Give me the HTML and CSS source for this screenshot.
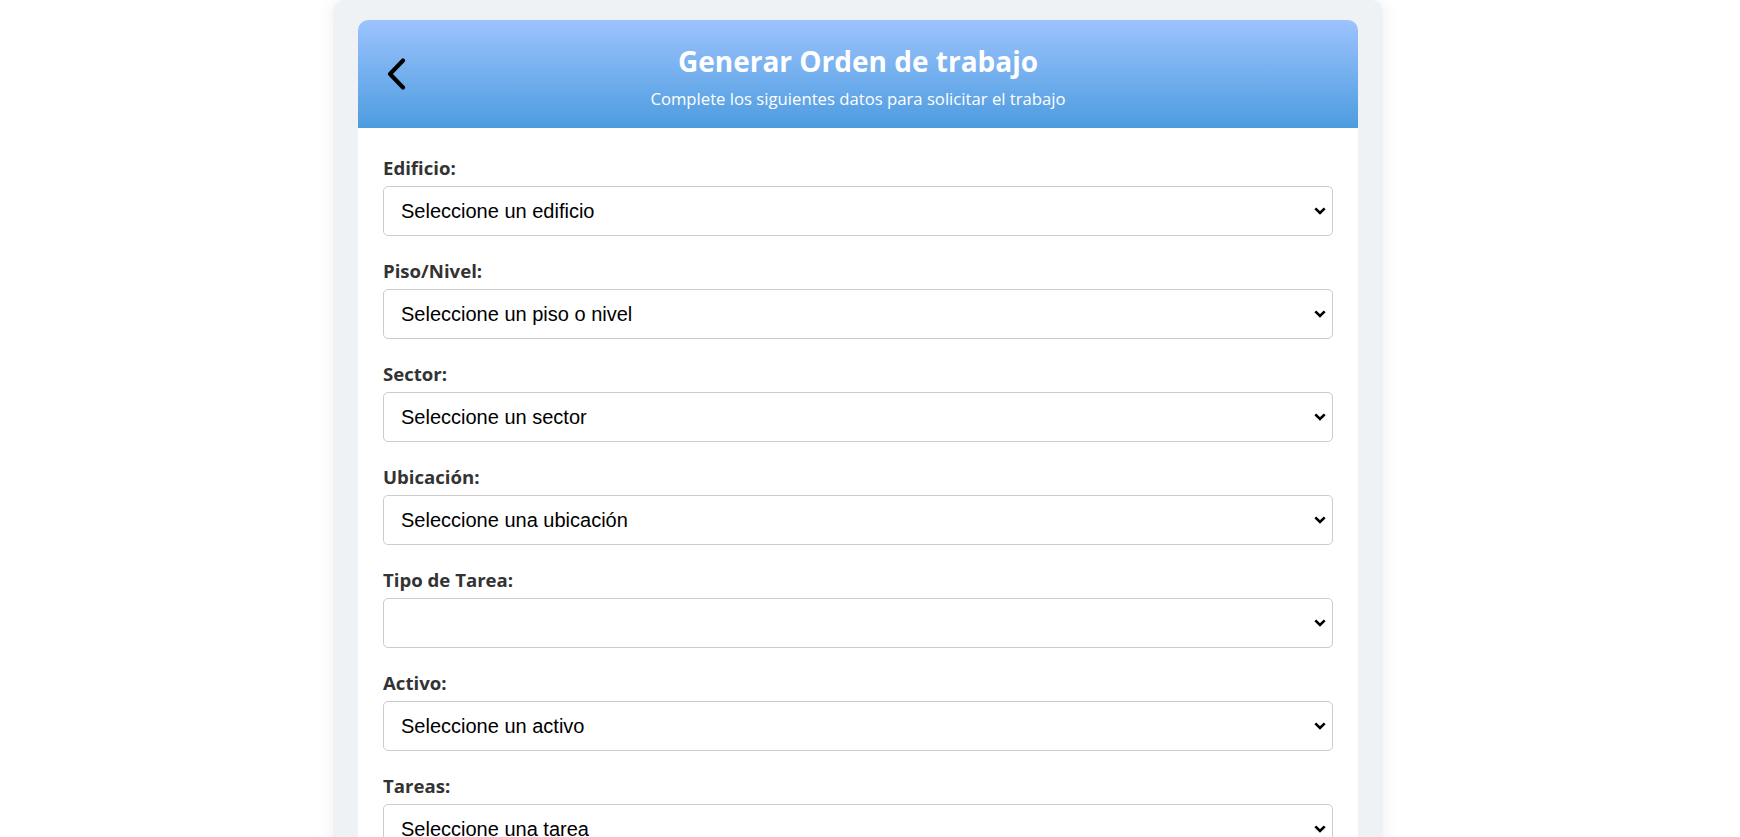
FILE: index.html
```html
<!DOCTYPE html>
<html lang="es">
<head>
<meta charset="utf-8">
<title>Generar Orden de trabajo</title>
<link rel="stylesheet" href="styles.css">
</head>
<body>
<div class="page">
  <div class="card">
    <header class="card-header">
      <button class="back" type="button" aria-label="Volver">
        <svg width="21" height="32" viewBox="0 0 21 32"><polyline points="17,2.5 4,16 17,29.5" fill="none" stroke="#000" stroke-width="4.1" stroke-linecap="round" stroke-linejoin="round"/></svg>
      </button>
      <div class="titles">
        <h1 class="title">Generar Orden de trabajo</h1>
        <p class="subtitle">Complete los siguientes datos para solicitar el trabajo</p>
      </div>
      <div class="spacer"></div>
    </header>
    <form class="card-body">
      <div class="field">
        <label class="label" for="edificio">Edificio:</label>
        <select class="select" id="edificio"><option>Seleccione un edificio</option></select>
      </div>
      <div class="field">
        <label class="label" for="piso">Piso/Nivel:</label>
        <select class="select" id="piso"><option>Seleccione un piso o nivel</option></select>
      </div>
      <div class="field">
        <label class="label" for="sector">Sector:</label>
        <select class="select" id="sector"><option>Seleccione un sector</option></select>
      </div>
      <div class="field">
        <label class="label" for="ubicacion">Ubicación:</label>
        <select class="select" id="ubicacion"><option>Seleccione una ubicación</option></select>
      </div>
      <div class="field">
        <label class="label" for="tipo">Tipo de Tarea:</label>
        <select class="select" id="tipo"><option></option></select>
      </div>
      <div class="field">
        <label class="label" for="activo">Activo:</label>
        <select class="select" id="activo"><option>Seleccione un activo</option></select>
      </div>
      <div class="field">
        <label class="label" for="tareas">Tareas:</label>
        <select class="select" id="tareas"><option>Seleccione una tarea</option></select>
      </div>
      <div class="field">
        <label class="label" for="prioridad">Prioridad:</label>
        <select class="select" id="prioridad"><option>Seleccione una prioridad</option></select>
      </div>
    </form>
  </div>
</div>
</body>
</html>
```
FILE: styles.css
```css
html, body {
  margin: 0;
  background: #ffffff;
}
body {
  padding: 0 24px 0 0;
  font-family: "Open Sans", "Lato", sans-serif;
}
.page {
  width: 1050px;
  box-sizing: border-box;
  margin: 0 auto;
  padding: 20px 25px 25px;
  background: #eff2f5;
  border-radius: 12px;
  box-shadow: 0 0 18px rgba(0, 0, 0, 0.07);
}
.card {
  background: #ffffff;
  border-radius: 10px 10px 0 0;
  overflow: hidden;
}
.card-header {
  height: 108px;
  box-sizing: border-box;
  display: grid;
  grid-template-columns: 1fr auto 1fr;
  align-items: center;
  padding: 0 28px;
  background: linear-gradient(to bottom, #9cc3fd, #4d9ce0);
}
.back {
  justify-self: start;
  display: flex;
  padding: 0;
  margin: 0;
  border: 0;
  background: none;
  cursor: pointer;
}
.titles {
  text-align: center;
  color: #ffffff;
  padding-top: 6px;
}
.title {
  margin: 0;
  font-size: 28px;
  line-height: 34px;
  font-weight: 700;
}
.subtitle {
  margin: 10px 0 0;
  font-size: 16.7px;
  line-height: 22px;
  font-weight: 400;
}
.card-body {
  padding: 28px 25px 25px;
  display: flex;
  flex-direction: column;
  gap: 23px;
}
.field {
  display: flex;
  flex-direction: column;
  gap: 6px;
}
.label {
  font-size: 18.6px;
  line-height: 24px;
  font-weight: 700;
  color: #333333;
}
.select {
  -webkit-appearance: none;
  appearance: none;
  height: 50px;
  box-sizing: border-box;
  width: 100%;
  padding: 0 30px 0 17px;
  border: 1px solid #cccccc;
  border-radius: 5px;
  background-color: #ffffff;
  background-image: url("data:image/svg+xml,%3Csvg xmlns='http://www.w3.org/2000/svg' width='12' height='8' viewBox='0 0 12 8'%3E%3Cpolyline points='1.3,1.3 6,6 10.7,1.3' fill='none' stroke='%23000' stroke-width='2.6'/%3E%3C/svg%3E");
  background-repeat: no-repeat;
  background-position: right 6px center;
  background-size: 12px 8px;
  color: #000000;
  font-family: "Liberation Sans", Arial, sans-serif;
  font-size: 20px;
}
```
